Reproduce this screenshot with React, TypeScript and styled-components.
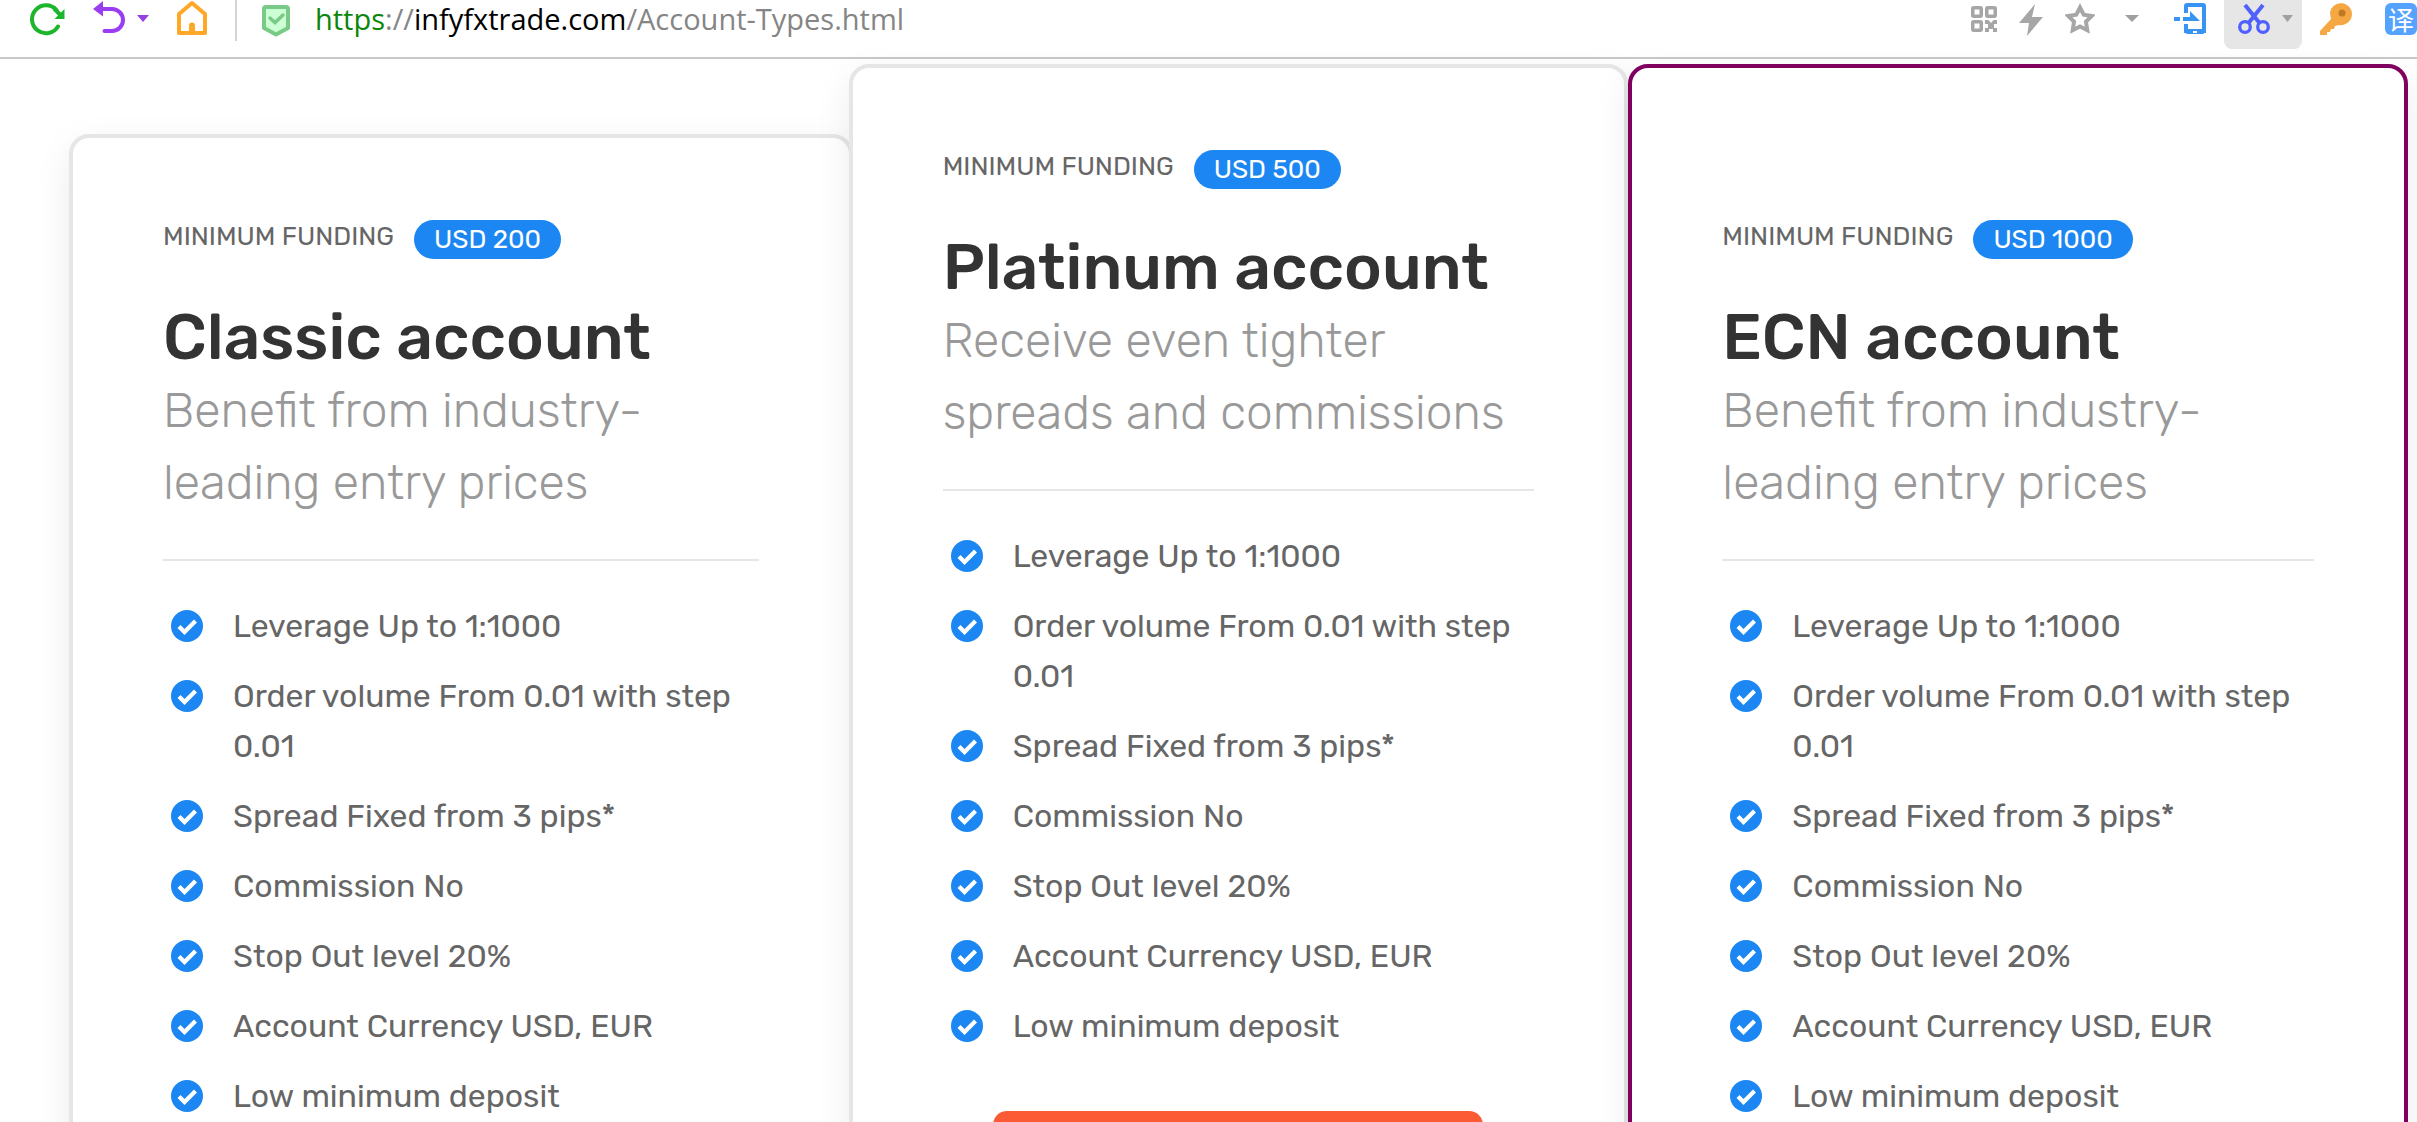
import React from "react";
import styled, { createGlobalStyle } from "styled-components";

const GlobalStyle = createGlobalStyle`
  *, *::before, *::after { box-sizing: border-box; }
  body { margin: 0; background: #fff; font-family: Rubik, Roboto, sans-serif; }
  ul, h2, p { margin: 0; padding: 0; }
`;

const Page = styled.div`
  height: 100vh;
  overflow: hidden;
  display: flex;
  flex-direction: column;
`;

const Toolbar = styled.header`
  display: flex;
  align-items: flex-start;
  justify-content: space-between;
  flex: none;
  height: 59px;
  padding-left: 30px;
  border-bottom: 2px solid #c8c8c8;
  background: #fff;
`;

const ToolGroup = styled.div<{ $gap: number }>`
  display: flex;
  align-items: flex-start;
  gap: ${(p) => p.$gap}px;
`;

const IconButton = styled.button<{ $width?: number }>`
  display: flex;
  align-items: center;
  justify-content: flex-end;
  width: ${(p) => (p.$width ? `${p.$width}px` : "auto")};
  height: 38px;
  padding: 0;
  border: 0;
  background: none;
  svg { display: block; }
`;

const ActiveTool = styled(IconButton)`
  justify-content: flex-start;
  gap: 12px;
  height: 49px;
  padding: 0 9px 11px 14px;
  border-radius: 0 0 8px 8px;
  background: #e6e6e6;
`;

const Separator = styled.span`
  width: 2px;
  height: 41px;
  background: #d4d4d4;
`;

const Address = styled.a`
  font: 29px/38px "Open Sans", sans-serif;
  color: #858585;
  text-decoration: none;
  white-space: nowrap;
`;
const Scheme = styled.span`
  color: #0a870a;
`;
const Host = styled.span`
  color: #000;
`;

const Plans = styled.main`
  display: grid;
  grid-template-columns: repeat(3, minmax(0, 1fr));
  flex: 1;
  padding: 5px 9px 0 69px;
`;

type Variant = "classic" | "platinum" | "ecn";

const Card = styled.section<{ $variant: Variant }>`
  display: flex;
  flex-direction: column;
  margin-top: ${(p) => (p.$variant === "classic" ? 70 : 0)}px;
  margin-right: ${(p) => (p.$variant === "classic" ? -4 : 0)}px;
  padding: ${(p) => (p.$variant === "ecn" ? 147 : 77)}px 90px 80px;
  border: 4px solid ${(p) => (p.$variant === "ecn" ? "#800060" : "#e6e6e6")};
  border-radius: 20px 20px 0 0;
  background: #fff;
  box-shadow: 0 12px 36px rgba(0, 0, 0, 0.08);
`;

const Funding = styled.p`
  display: flex;
  align-items: center;
  gap: 20px;
  height: 44px;
  font-size: 26px;
  line-height: 36px;
  color: #666;
`;

const Badge = styled.span`
  margin-top: 4px;
  padding: 0 20px;
  border-radius: 20px;
  background: #1c87f2;
  color: #fff;
  line-height: 39px;
`;

const Title = styled.h2`
  margin-top: 40px;
  font-size: 64px;
  line-height: 76px;
  font-weight: 500;
  color: #333;
`;

const Subtitle = styled.p`
  padding-bottom: 40px;
  border-bottom: 2px solid #e6e6e6;
  font-size: 48px;
  line-height: 72px;
  font-weight: 300;
  color: #999;
`;

const Features = styled.ul`
  display: flex;
  flex-direction: column;
  gap: 20px;
  margin-top: 40px;
  list-style: none;
`;

const Feature = styled.li`
  display: flex;
  gap: 30px;
  padding-left: 8px;
  font-size: 32px;
  line-height: 50px;
  color: #666;
  svg { flex: none; margin-top: 9px; }
`;

const OpenButton = styled.button`
  flex: none;
  width: 490px;
  height: 90px;
  margin: 60px auto 0;
  border: 0;
  border-radius: 14px;
  background: #fc5a34;
`;

const Check = () => (
  <svg width="32" height="32" viewBox="0 0 32 32" aria-hidden="true">
    <circle cx="16" cy="16" r="16" fill="#1c87f2" />
    <path d="M8 16.5l5.5 5.5L24.5 11" fill="none" stroke="#fff" strokeWidth="4.2" />
  </svg>
);

const Caret = ({ color, width = 12 }: { color: string; width?: number }) => (
  <svg width={width} height="8" viewBox="0 0 12 8" preserveAspectRatio="none" aria-hidden="true">
    <path d="M0 0h12L6 7z" fill={color} />
  </svg>
);

const Reload = () => (
  <svg width="35" height="38" viewBox="0 0 35 38" aria-hidden="true">
    <path d="M26.5 10A14 14 0 1 0 28 26.500" fill="none" stroke="#1cb52c" strokeWidth="4" strokeLinecap="round" />
    <path d="M34.500 9v10H24.500l3-3z" fill="#1cb52c" />
    <path d="M24 8.500l6 6" stroke="#1cb52c" strokeWidth="4" />
  </svg>
);

const Undo = () => (
  <svg width="33" height="38" viewBox="0 0 33 38" aria-hidden="true">
    <path d="M8 9h11a11 11 0 0 1 0 22h-7.500" fill="none" stroke="#9a3df0" strokeWidth="4" strokeLinecap="round" />
    <path d="M0 9l10-8v15.500z" fill="#9a3df0" />
  </svg>
);

const Home = () => (
  <svg width="30" height="38" viewBox="0 0 30 38" aria-hidden="true">
    <path d="M2 14L15 3l13 11v19H2z" fill="none" stroke="#ffa827" strokeWidth="4" strokeLinejoin="round" />
    <path d="M12 33v-7.500a3 3 0 0 1 6 0V33z" fill="#ffa827" />
  </svg>
);

const Shield = () => (
  <svg width="28" height="38" viewBox="0 0 28 38" aria-hidden="true">
    <path d="M2 9q0-2 2-2h20q2 0 2 2v19l-12 6.500L2 28z" fill="#ccffd4" stroke="#79c987" strokeWidth="4" strokeLinejoin="round" />
    <path d="M8 18l5 4.500L21 15" fill="none" stroke="#79c987" strokeWidth="3.500" strokeLinecap="round" />
  </svg>
);

const Qr = () => (
  <svg width="26" height="38" viewBox="0 0 26 38" aria-hidden="true">
    <g fill="none" stroke="#a6a6a6" strokeWidth="3.500">
      <rect x="1.750" y="7.750" width="8.500" height="8.500" rx="1" />
      <rect x="15.750" y="7.750" width="8.500" height="8.500" rx="1" />
      <rect x="1.750" y="21.750" width="8.500" height="8.500" rx="1" />
    </g>
    <path d="M14 20h3.500l2.500 3 2.500-3H26v4h-3v4h3v4h-4v-3h-4v3h-4v-4h3v-4h-3z" fill="#a6a6a6" />
  </svg>
);

const Bolt = () => (
  <svg width="24" height="38" viewBox="0 0 24 38" aria-hidden="true">
    <path d="M16 4L0 23h10L8 36 24 17H13z" fill="#a6a6a6" />
  </svg>
);

const Star = () => (
  <svg width="30" height="38" viewBox="0 0 30 38" aria-hidden="true">
    <path d="M15 7.500l3.700 7.200 8 1.300-5.700 5.700 1.300 8.500L15 26.500l-7.300 3.700L9 21.700 3.300 16l8-1.300z" fill="none" stroke="#a6a6a6" strokeWidth="4" />
  </svg>
);

const Phone = () => (
  <svg width="32" height="38" viewBox="0 0 32 38" aria-hidden="true">
    <path d="M12 13V6q0-1 1-1h16q1 0 1 1v25H12v-7" fill="none" stroke="#3794f2" strokeWidth="4" />
    <path d="M12 29h18v4q0 1-1 1H13q-1 0-1-1z" fill="#3794f2" />
    <path d="M19 32h4" stroke="#fff" strokeWidth="2" />
    <path d="M0 17h6v4H0zM9 17h7v-6l10 10H9z" fill="#3794f2" />
  </svg>
);

const Scissors = () => (
  <svg width="32" height="38" viewBox="0 0 32 38" aria-hidden="true">
    <g fill="none" stroke="#5060ff">
      <path d="M7 5l14.500 18M25 5L10.500 23" strokeWidth="4" />
      <circle cx="7" cy="27" r="5.300" strokeWidth="3.300" />
      <circle cx="25" cy="27" r="5.300" strokeWidth="3.300" />
    </g>
  </svg>
);

const Key = () => (
  <svg width="32" height="38" viewBox="0 0 32 38" aria-hidden="true">
    <path d="M10 13a11 11 0 1 1 9 12l-4 1-1 3h-3l-1 3H7v3H0v-4l11-12z" fill="#f4a742" />
    <circle cx="22" cy="13" r="3.500" fill="#bd7a22" />
  </svg>
);

const TranslateTile = styled.span`
  width: 32px;
  height: 32px;
  border-radius: 6px;
  background: #55a3ff;
  color: #fff;
  font: 26px/32px "Noto Sans CJK SC", sans-serif;
  text-align: center;
`;

const features = [
  "Leverage Up to 1:1000",
  "Order volume From 0.01 with step 0.01",
  "Spread Fixed from 3 pips*",
  "Commission No",
  "Stop Out level 20%",
  "Account Currency USD, EUR",
  "Low minimum deposit",
];

const plans: { variant: Variant; funding: string; title: string; subtitle: string }[] = [
  { variant: "classic", funding: "USD 200", title: "Classic account", subtitle: "Benefit from industry-leading entry prices" },
  { variant: "platinum", funding: "USD 500", title: "Platinum account", subtitle: "Receive even tighter spreads and commissions" },
  { variant: "ecn", funding: "USD 1000", title: "ECN account", subtitle: "Benefit from industry-leading entry prices" },
];

export default function App() {
  return (
    <Page>
      <GlobalStyle />
      <Toolbar>
        <ToolGroup $gap={25}>
          <ToolGroup $gap={28}>
            <IconButton aria-label="Reload"><Reload /></IconButton>
            <ToolGroup $gap={11}>
              <IconButton aria-label="Undo"><Undo /></IconButton>
              <IconButton aria-label="Undo history"><Caret color="#9540e0" /></IconButton>
            </ToolGroup>
            <IconButton aria-label="Home"><Home /></IconButton>
            <Separator />
          </ToolGroup>
          <IconButton aria-label="Site security"><Shield /></IconButton>
          <Address href="https://infyfxtrade.com/Account-Types.html">
            <Scheme>https</Scheme>://<Host>infyfxtrade.com</Host>/Account-Types.html
          </Address>
        </ToolGroup>
        <ToolGroup $gap={18}>
          <ToolGroup $gap={22}>
            <IconButton aria-label="QR code"><Qr /></IconButton>
            <IconButton aria-label="Quick mode"><Bolt /></IconButton>
            <IconButton aria-label="Bookmark"><Star /></IconButton>
          </ToolGroup>
          <IconButton $width={26} aria-label="More bookmarks"><Caret color="#a0a0a0" width={14} /></IconButton>
          <IconButton $width={49} aria-label="Send to phone"><Phone /></IconButton>
          <ActiveTool $width={78} aria-label="Screenshot"><Scissors /><Caret color="#a0a0a0" width={11} /></ActiveTool>
          <IconButton aria-label="Passwords"><Key /></IconButton>
          <IconButton $width={47} aria-label="Translate"><TranslateTile>译</TranslateTile></IconButton>
        </ToolGroup>
      </Toolbar>
      <Plans>
        {plans.map((plan) => (
          <Card key={plan.variant} $variant={plan.variant}>
            <Funding>
              MINIMUM FUNDING <Badge>{plan.funding}</Badge>
            </Funding>
            <Title>{plan.title}</Title>
            <Subtitle>{plan.subtitle}</Subtitle>
            <Features>
              {features.map((text) => (
                <Feature key={text}>
                  <Check />
                  <span>{text}</span>
                </Feature>
              ))}
            </Features>
            <OpenButton aria-label={`Open ${plan.title}`} />
          </Card>
        ))}
      </Plans>
    </Page>
  );
}
